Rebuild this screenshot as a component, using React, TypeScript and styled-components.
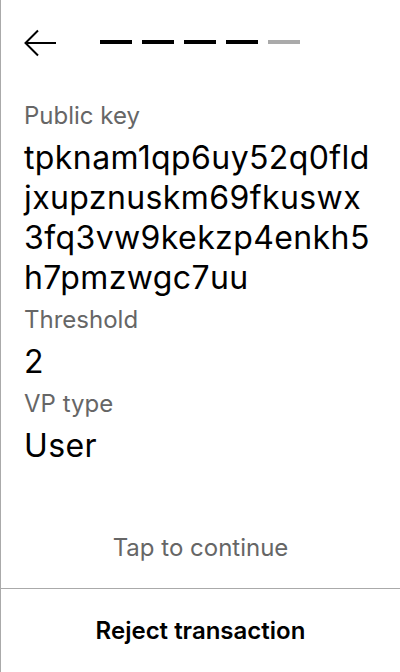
import React from "react";
import styled, { createGlobalStyle } from "styled-components";

const GlobalStyle = createGlobalStyle`
  html, body {
    margin: 0;
    padding: 0;
    background: #ffffff;
  }
  body {
    font-family: Inter, "Noto Sans", "Liberation Sans", sans-serif;
    color: #000000;
  }
  * { box-sizing: border-box; }
`;

const Screen = styled.div`
  width: 400px;
  height: 672px;
  display: flex;
  flex-direction: column;
  border-left: 1px solid #aaaaaa;
  background: #ffffff;
`;

const Header = styled.div`
  display: flex;
  align-items: center;
  height: 93px;
  padding: 0 23px 7px 23px;
  gap: 44px;
  flex-shrink: 0;
`;

const BackButton = styled.button`
  display: flex;
  align-items: center;
  justify-content: center;
  width: 32px;
  height: 28px;
  padding: 0;
  border: none;
  background: transparent;
  cursor: pointer;
`;

const Progress = styled.div`
  display: flex;
  gap: 10px;
  margin-top: -2px;
`;

const Step = styled.div<{ $done: boolean }>`
  width: 32px;
  height: 4px;
  background: ${(p) => (p.$done ? "#000000" : "#aaaaaa")};
`;

const Content = styled.div`
  display: flex;
  flex-direction: column;
  padding: 1px 4px 0 23px;
`;

const Label = styled.div`
  font-size: 24px;
  line-height: 44px;
  color: #666666;
`;

const Value = styled.div`
  font-size: 32px;
  line-height: 40px;
  letter-spacing: 0.4px;
  color: #000000;
`;

const Spacer = styled.div`
  flex: 1;
`;

const Hint = styled.div`
  text-align: center;
  font-size: 24px;
  line-height: 40px;
  color: #666666;
  padding-bottom: 20px;
`;

const Footer = styled.button`
  height: 84px;
  flex-shrink: 0;
  border: none;
  border-top: 1px solid #aaaaaa;
  background: transparent;
  font-family: inherit;
  font-size: 24px;
  font-weight: 600;
  color: #000000;
  cursor: pointer;
  padding: 0;
`;

const fields: { label: string; parts: string[] }[] = [
  {
    label: "Public key",
    parts: ["tpknam1qp6uy52q0fld", "jxupznuskm69fkuswx", "3fq3vw9kekzp4enkh5", "h7pmzwgc7uu"],
  },
  { label: "Threshold", parts: ["2"] },
  { label: "VP type", parts: ["User"] },
];

const steps = [true, true, true, true, false];

export default function App() {
  return (
    <>
      <GlobalStyle />
      <Screen>
        <Header>
          <BackButton aria-label="Back">
            <svg width="32" height="28" viewBox="0 0 32 28" fill="none">
              <path d="M1.5 14 H32 M14 1.5 L1.5 14 L14 26.5" stroke="#000" strokeWidth="2" />
            </svg>
          </BackButton>
          <Progress>
            {steps.map((d, i) => (
              <Step key={i} $done={d} />
            ))}
          </Progress>
        </Header>
        <Content>
          {fields.map((f) => (
            <React.Fragment key={f.label}>
              <Label>{f.label}</Label>
              <Value>
                {f.parts.map((p, i) => (
                  <React.Fragment key={i}>
                    {i > 0 && <wbr />}
                    {p}
                  </React.Fragment>
                ))}
              </Value>
            </React.Fragment>
          ))}
        </Content>
        <Spacer />
        <Hint>Tap to continue</Hint>
        <Footer>Reject transaction</Footer>
      </Screen>
    </>
  );
}
